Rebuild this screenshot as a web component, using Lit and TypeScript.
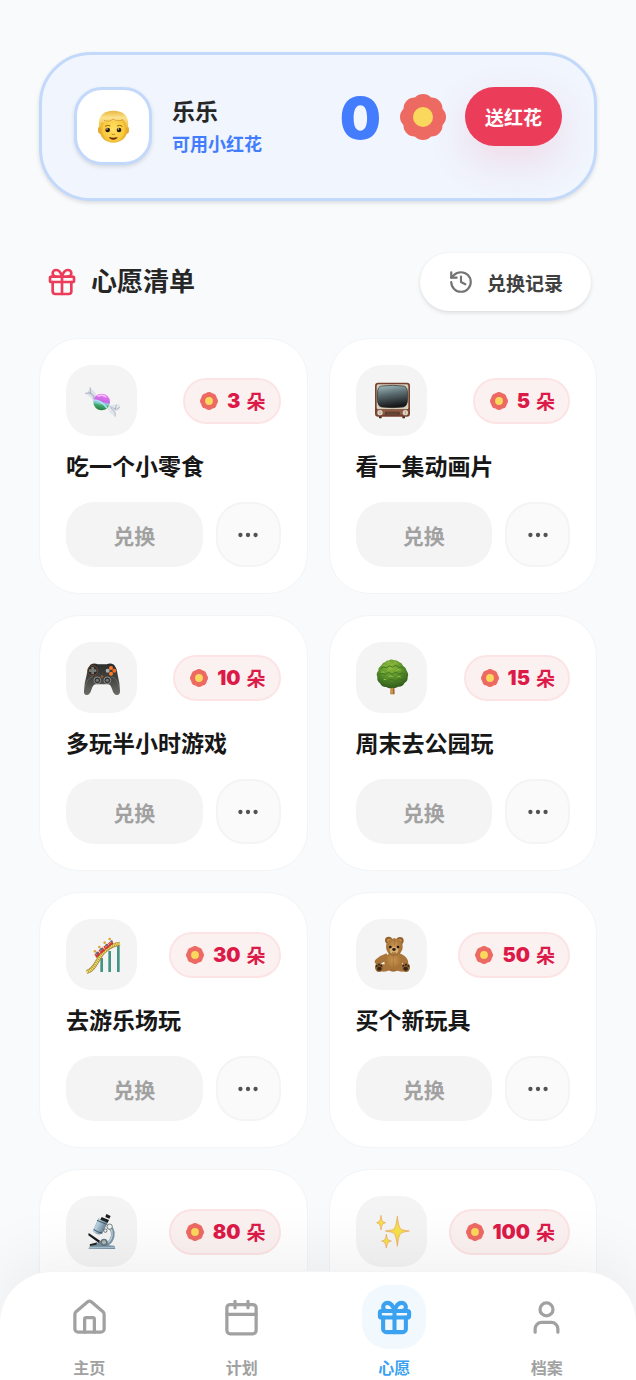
import { LitElement, css, html, svg } from "lit";
import { customElement, property } from "lit/decorators.js";
import { classMap } from "lit/directives/class-map.js";

type Wish = { title: string; cost: number; icon: string };
type Tab = { label: string; icon: string };

const wishes: Wish[] = [
  { title: "吃一个小零食", cost: 3, icon: "candy" },
  { title: "看一集动画片", cost: 5, icon: "tv" },
  { title: "多玩半小时游戏", cost: 10, icon: "gamepad" },
  { title: "周末去公园玩", cost: 15, icon: "tree" },
  { title: "去游乐场玩", cost: 30, icon: "coaster" },
  { title: "买个新玩具", cost: 50, icon: "bear" },
  { title: "去科技馆", cost: 80, icon: "microscope" },
  { title: "实现大心愿", cost: 100, icon: "sparkles" },
];

const tabs: Tab[] = [
  { label: "主页", icon: "home" },
  { label: "计划", icon: "calendar" },
  { label: "心愿", icon: "gift" },
  { label: "档案", icon: "user" },
];

// line icons, 24 x 24 grid
const lineIcons: Record<string, unknown> = {
  home: svg`<path d="M15 21v-8a1 1 0 0 0-1-1h-4a1 1 0 0 0-1 1v8" />
    <path d="M3 10a2 2 0 0 1 .709-1.528l7-5.999a2 2 0 0 1 2.582 0l7 5.999A2 2 0 0 1 21 10v9a2 2 0 0 1-2 2H5a2 2 0 0 1-2-2z" />`,
  calendar: svg`<path d="M8 2v4M16 2v4M3 10h18" />
    <rect x="3" y="4" width="18" height="18" rx="2" />`,
  gift: svg`<rect x="3" y="8" width="18" height="4" rx="1" />
    <path d="M12 8v13" />
    <path d="M19 12v7a2 2 0 0 1-2 2H7a2 2 0 0 1-2-2v-7" />
    <path d="M7.5 8a2.5 2.5 0 0 1 0-5A4.8 8 0 0 1 12 8a4.8 8 0 0 1 4.5-5 2.5 2.5 0 0 1 0 5" />`,
  user: svg`<path d="M19 21v-2a4 4 0 0 0-4-4H9a4 4 0 0 0-4 4v2" />
    <circle cx="12" cy="7" r="4" />`,
  history: svg`<path d="M3 12a9 9 0 1 0 9-9 9.75 9.75 0 0 0-6.74 2.74L3 8" />
    <path d="M3 3v5h5" />
    <path d="M12 7v5l4 2" />`,
  more: svg`<circle cx="12" cy="12" r="1" />
    <circle cx="19" cy="12" r="1" />
    <circle cx="5" cy="12" r="1" />`,
};

// coloured stickers, 111 x 111 grid
const stickers: Record<string, unknown> = {
  boy: svg`<defs>
      <radialGradient id="skin" cx=".5" cy=".55" r=".55">
        <stop offset="0" stop-color="#ffe063" />
        <stop offset=".7" stop-color="#f9cb3d" />
        <stop offset="1" stop-color="#dd9820" />
      </radialGradient>
      <linearGradient id="hair" x2="0" y2="1">
        <stop offset="0" stop-color="#e9b53c" />
        <stop offset=".4" stop-color="#fbe28c" />
        <stop offset="1" stop-color="#efbd42" />
      </linearGradient>
    </defs>
    <ellipse cx="15" cy="66" rx="6" ry="11" fill="#e8a92d" />
    <ellipse cx="96" cy="66" rx="6" ry="11" fill="#e8a92d" />
    <path d="M15 43C15 18 33 12 55 12s41 6 41 31v26c0 21-20 35-41 35S15 90 15 69z" fill="url(#skin)" />
    <path d="M12 58C8 22 27 8 55 8s49 14 44 50l-5 2c0-14-5-21-11-26-12 7-26 6-34 1-6 6-21 7-29 9-3 4-2 10-3 16z" fill="url(#hair)" />
    <path d="M27 37c12 5 22 1 27-4 8 6 20 7 30 2" fill="none" stroke="#c98c22" stroke-width="2" />
    <path d="M30 55q9-6 16-1M66 54q8-5 16 1" fill="none" stroke="#9a651a" stroke-width="3" />
    <circle cx="38" cy="66" r="7" fill="#2b160c" />
    <circle cx="72" cy="66" r="7" fill="#2b160c" />
    <circle cx="36" cy="63" r="2" fill="#fff" />
    <circle cx="70" cy="63" r="2" fill="#fff" />
    <path d="M50 78q5 4 10 0" fill="none" stroke="#c47c1d" stroke-width="3" />
    <path d="M42 87q13 4 26 0-3 8-13 8t-13-8z" fill="#6a2410" />`,
  candy: svg`<defs>
      <linearGradient id="ball" x1=".6" x2=".4" y2="1">
        <stop offset="0" stop-color="#ee7cf4" />
        <stop offset=".45" stop-color="#c668e3" />
        <stop offset=".58" stop-color="#8bd3d5" />
        <stop offset=".7" stop-color="#43ad70" />
        <stop offset="1" stop-color="#28753d" />
      </linearGradient>
    </defs>
    <path d="M21 16l17 18 2 13-10 5-24-18 10-5z" fill="#dce1ea" />
    <path d="M21 16l2 17-17 1M16 29l16 14-2 9M23 33l14 14" fill="none" stroke="#9ba2b4" stroke-width="2" />
    <path d="M80 70l29-4 2 17-12 4-2 17-17-11-6-15z" fill="#e2e5ec" />
    <path d="M80 74l20 8 11-7M84 78l12 14 1 12M100 68l-4 16" fill="none" stroke="#9aa6b0" stroke-width="2" />
    <circle cx="56" cy="60" r="25" fill="url(#ball)" />
    <path d="M32 54q22 0 40 24" fill="none" stroke="#a8e4f3" stroke-width="5" />
    <path d="M44 43q14-8 26 3" fill="none" stroke="#fac4ff" stroke-width="4" />`,
  tv: svg`<defs>
      <linearGradient id="screen" x2=".2" y2="1">
        <stop offset="0" stop-color="#a6c0c4" />
        <stop offset=".45" stop-color="#5c6d71" />
        <stop offset="1" stop-color="#17191b" />
      </linearGradient>
    </defs>
    <path d="M18 102h8v7h-8zM88 102h8v7h-8z" fill="#47271c" />
    <rect x="6" y="2" width="105" height="102" rx="9" fill="#75422f" />
    <rect x="11" y="7" width="95" height="75" rx="5" fill="#d8cebb" />
    <path d="M26 12q33-4 65 0 10 1 12 14 2 16 0 34-2 13-12 15-33 4-65 0-10-2-12-15-2-18 0-34 2-13 12-14z" fill="url(#screen)" stroke="#252525" stroke-width="2" />
    <path d="M11 83h95v15H11z" fill="#8d5a43" />
    <rect x="36" y="89" width="44" height="11" rx="3" fill="#56372b" />
    <path d="M40 93h36M40 97h36" stroke="#9b755f" stroke-width="1" />
    <circle cx="21" cy="92" r="8" fill="#ded4c5" />
    <circle cx="97" cy="92" r="8" fill="#ded4c5" />
    <path d="M21 87v10M97 87v10" stroke="#9d907d" stroke-width="2" />`,
  gamepad: svg`<defs>
      <linearGradient id="shell" x2="0" y2="1">
        <stop offset="0" stop-color="#292b2a" />
        <stop offset=".5" stop-color="#454643" />
        <stop offset="1" stop-color="#6b6c66" />
      </linearGradient>
    </defs>
    <path d="M22 17q12-7 22-1h27q10-6 22 1 8 8 11 30 7 27 7 49 0 12-9 12-10 0-15-18-4-14-12-14H39q-9 0-13 14-5 18-15 18-9 0-8-12 1-25 8-49 3-22 11-30z" fill="url(#shell)" />
    <path d="M7 83q6-28 22-29M107 83q-6-28-22-29" fill="none" stroke="#77776f" stroke-width="2" />
    <circle cx="29" cy="35" r="15" fill="#292a29" stroke="#955331" stroke-width="2" />
    <path d="M25 24h8v7h7v8h-7v7h-8v-7h-7v-8h7z" fill="#777975" />
    <circle cx="84" cy="27" r="6" fill="#ff7b28" />
    <circle cx="94" cy="35" r="6" fill="#f46a21" />
    <circle cx="84" cy="44" r="6" fill="#ff7b28" />
    <circle cx="74" cy="35" r="6" fill="#b1aeaa" />
    <circle cx="57" cy="53" r="4" fill="#a65325" />
    <circle cx="43" cy="64" r="10" fill="#2b2d2c" stroke="#8f928e" stroke-width="3" />
    <circle cx="73" cy="64" r="10" fill="#2b2d2c" stroke="#8f928e" stroke-width="3" />
    <circle cx="43" cy="64" r="5" fill="#767977" />
    <circle cx="73" cy="64" r="5" fill="#767977" />`,
  tree: svg`<defs>
      <radialGradient id="crown" cx=".45" cy=".25" r=".75">
        <stop offset="0" stop-color="#8fbd3d" />
        <stop offset=".5" stop-color="#5c922c" />
        <stop offset="1" stop-color="#2f5c1a" />
      </radialGradient>
    </defs>
    <path d="M53 78h11l1 28H52z" fill="#a16a2c" />
    <path d="M57 84v22" stroke="#e0a753" stroke-width="4" />
    <path d="M46 5q8-7 18-1 9-1 14 5 9 2 12 11 10 6 11 15 7 10 3 19 1 12-9 17-6 13-20 12-8 6-17 3-9 4-18-2-14 1-19-11-10-7-8-19-5-11 3-19 0-10 9-16 4-9 12-10 4-5 9-4z" fill="url(#crown)" />
    <g fill="none" stroke="#3f7620" stroke-width="3">
      <path d="M24 28q8-9 17-1 7-11 17-2 10-10 19 0 10-5 16 4" />
      <path d="M17 48q10-10 20-1 9-12 20 0 10-12 21-1 9-8 18 0" />
      <path d="M22 68q10-12 21-1 12-12 23 0 12-11 25-4" />
    </g>
    <g fill="none" stroke="#97c246" stroke-width="3">
      <path d="M40 12q7-6 11 0M62 12q7-4 11 2M29 20q5-4 9 1M46 31q7-5 11 0M70 34q8-5 13 1M24 40q7-4 10 1M47 53q7-5 12 0M73 54q6-4 10 0M32 62q5-3 8 1" />
    </g>`,
  coaster: svg`<g stroke="#449486" stroke-width="8">
      <path d="M56 66v42M80 45v63M106 28v80" />
    </g>
    <path d="M11 108C39 101 42 64 66 44 80 32 92 25 111 23" fill="none" stroke="#a58b38" stroke-width="12" />
    <path d="M11 108C39 101 42 64 66 44 80 32 92 25 111 23" fill="none" stroke="#f0dc6b" stroke-width="8" stroke-dasharray="4 2" />
    <path d="M34 56l11-10 8 9-12 11zM47 43l11-9 9 9-13 11zM61 32l12-9 8 9-13 9zM75 22l13-9 3 11-11 7z" fill="#c93d30" />
    <path d="M37 58l7-6M51 46l7-6M66 34l7-5M79 23l7-5" stroke="#f49379" stroke-width="3" />
    <g fill="#dba83a">
      <circle cx="36" cy="46" r="4" /><circle cx="49" cy="33" r="4" />
      <circle cx="65" cy="20" r="4" /><circle cx="80" cy="9" r="4" />
    </g>
    <path d="M39 50l5 4M52 38l5 4M68 25l5 4M83 14l4 4" stroke="#4d71a4" stroke-width="5" />`,
  bear: svg`<defs>
      <radialGradient id="fur" cx=".5" cy=".4" r=".65">
        <stop offset="0" stop-color="#c99550" />
        <stop offset="1" stop-color="#98642b" />
      </radialGradient>
    </defs>
    <circle cx="47" cy="13" r="11" fill="#94602b" /><circle cx="81" cy="14" r="11" fill="#94602b" />
    <circle cx="48" cy="14" r="6" fill="#c49559" /><circle cx="80" cy="15" r="6" fill="#c49559" />
    <path d="M41 52Q22 58 9 70q-8 8 0 14 9 4 19-4l18-9z" fill="#a97439" />
    <path d="M79 52q19 6 25 20 5 11-4 14-8 2-14-7L74 69z" fill="#a97439" />
    <ellipse cx="61" cy="78" rx="27" ry="29" fill="url(#fur)" />
    <path d="M61 56v48" stroke="#a36f33" stroke-width="2" />
    <ellipse cx="64" cy="33" rx="25" ry="26" fill="url(#fur)" />
    <path d="M64 8v20" stroke="#a36f33" stroke-width="2" />
    <ellipse cx="63" cy="43" rx="13" ry="11" fill="#d8af71" />
    <ellipse cx="52" cy="33" rx="4" ry="4" fill="#20150f" /><ellipse cx="75" cy="33" rx="4" ry="4" fill="#20150f" />
    <path d="M57 38q6-4 12 0-1 7-6 7t-6-7z" fill="#2b1911" />
    <path d="M57 50q6 4 12 0" fill="none" stroke="#674018" stroke-width="2" />
    <ellipse cx="32" cy="96" rx="22" ry="11" fill="#a97439" /><ellipse cx="87" cy="96" rx="22" ry="11" fill="#a97439" />
    <ellipse cx="18" cy="94" rx="12" ry="14" fill="#94662f" /><ellipse cx="99" cy="94" rx="12" ry="14" fill="#94662f" />
    <ellipse cx="19" cy="98" rx="7" ry="6" fill="#33241b" /><ellipse cx="98" cy="98" rx="7" ry="6" fill="#33241b" />
    <g fill="#33241b">
      <circle cx="11" cy="90" r="3" /><circle cx="18" cy="86" r="3" /><circle cx="25" cy="89" r="3" />
      <circle cx="91" cy="89" r="3" /><circle cx="99" cy="86" r="3" /><circle cx="106" cy="90" r="3" />
    </g>`,
  microscope: svg`<defs>
      <linearGradient id="tube" x2="1" y2=".5">
        <stop offset="0" stop-color="#617c92" />
        <stop offset=".4" stop-color="#b9d2e0" />
        <stop offset="1" stop-color="#536e80" />
      </linearGradient>
    </defs>
    <path d="M72 40q20 3 17 29-3 18-19 26" fill="none" stroke="#7893a3" stroke-width="11" />
    <path d="M75 42q15 5 12 27-3 16-17 23" fill="none" stroke="#bed0d8" stroke-width="4" />
    <path d="M16 107l5-9q19-3 35-16 19 1 21 15l17 1 3 10z" fill="#758fa2" />
    <path d="M18 103h76" stroke="#b4cad6" stroke-width="3" />
    <path d="M17 60l34 23-3 7-32-23z" fill="#17191a" />
    <path d="M20 94l23-6-3 7-19 4z" fill="#222627" />
    <circle cx="63" cy="88" r="11" fill="#637986" /><circle cx="63" cy="88" r="6" fill="#b6b5af" />
    <path d="M46 15l29 12-18 35q-15 7-28-7z" fill="url(#tube)" />
    <path d="M42 22l29 12M32 49q12 10 26 11" fill="none" stroke="#41596a" stroke-width="3" />
    <path d="M56 12l22 9-4 8-22-9zM70 3l13 6-4 8-12-5z" fill="#1e2020" />
    <circle cx="80" cy="41" r="8" fill="#eef1f1" stroke="#444a4c" stroke-width="2" />
    <circle cx="67" cy="53" r="5" fill="#f2f4f3" stroke="#383e40" stroke-width="2" />`,
  sparkles: svg`<defs>
      <radialGradient id="spark">
        <stop offset="0" stop-color="#f6e34c" />
        <stop offset=".5" stop-color="#f5d84c" />
        <stop offset="1" stop-color="#e8a257" />
      </radialGradient>
    </defs>
    <g fill="url(#spark)" stroke="#edac5b" stroke-width="2">
      <path d="M73 9q4 37 12 40 5 3 24 5-19 3-24 6-8 4-12 40-4-36-12-40-5-3-24-6 19-2 24-5 8-3 12-40z" />
      <path d="M24 7q2 16 5 18 2 2 9 4-7 2-9 5-3 3-5 17-2-14-5-17-2-3-8-5 6-2 8-4 3-2 5-18z" />
      <path d="M40 63q2 15 5 17 2 2 10 4-8 2-10 5-3 3-5 16-2-13-5-16-2-3-9-5 7-2 9-4 3-2 5-17z" />
    </g>`,
};

const flower = (size: number) => html`<svg
  class="flower"
  width=${size}
  height=${size}
  viewBox="0 0 46 46"
  aria-hidden="true"
>
  <g fill="#ed6a63">
    ${[0, 45, 90, 135, 180, 225, 270, 315].map(
      (angle) =>
        svg`<circle cx="23" cy="11" r="11" transform="rotate(${angle} 23 23)" />`
    )}
  </g>
  <circle cx="23" cy="23" r="10" fill="#fad85d" />
</svg>`;

const lineIcon = (name: string, size: number, weight = 2) => html`<svg
  width=${size}
  height=${size}
  viewBox="0 0 24 24"
  fill="none"
  stroke="currentColor"
  stroke-width=${weight}
  stroke-linecap="round"
  stroke-linejoin="round"
  aria-hidden="true"
>
  ${lineIcons[name]}
</svg>`;

const sticker = (name: string) => html`<svg
  width="37"
  height="37"
  viewBox="0 0 111 111"
  overflow="visible"
  aria-hidden="true"
>
  ${stickers[name]}
</svg>`;

const base = css`
  * {
    box-sizing: border-box;
  }
  svg {
    display: block;
    flex: none;
  }
  button {
    margin: 0;
    padding: 0;
    border: none;
    font: inherit;
    cursor: pointer;
  }
`;

@customElement("wish-card")
export class WishCard extends LitElement {
  @property({ attribute: false })
  wish!: Wish;

  static styles = [
    base,
    css`
      :host {
        display: block;
      }
      .card {
        padding: 26px;
        border: 1px solid #f3f4f5;
        border-radius: 40px;
        background: #fff;
      }
      .top,
      .actions {
        display: flex;
        align-items: center;
        justify-content: space-between;
      }
      .picture {
        display: grid;
        place-items: center;
        width: 71px;
        height: 71px;
        border-radius: 26px;
        background: #f4f4f4;
      }
      .cost {
        display: flex;
        align-items: center;
        height: 46px;
        padding: 0 13px 0 15px;
        border: 2px solid #fce4e5;
        border-radius: 23px;
        background: #fcf1f1;
        color: #dc1a48;
        white-space: nowrap;
      }
      .number {
        margin: 0 6px 0 9px;
        font-size: 20px;
        font-weight: 900;
      }
      .unit {
        font-size: 19px;
        font-weight: 700;
      }
      .title {
        margin: 14px 0 18px;
        color: #171717;
        font-size: 23px;
        font-weight: 700;
        line-height: 34px;
        white-space: nowrap;
      }
      .actions {
        gap: 13px;
      }
      .redeem {
        flex: 1;
        height: 65px;
        border-radius: 28px;
        background: #f4f4f4;
        color: #a1a1a1;
        font-size: 21px;
        font-weight: 700;
      }
      .more {
        display: grid;
        place-items: center;
        width: 65px;
        height: 65px;
        border: 2px solid #f4f4f4;
        border-radius: 28px;
        background: #fafafa;
        color: #525252;
      }
    `,
  ];

  render() {
    return html`<article class="card">
      <div class="top">
        <div class="picture">${sticker(this.wish.icon)}</div>
        <div class="cost">
          ${flower(18)}
          <span class="number">${this.wish.cost}</span>
          <span class="unit">朵</span>
        </div>
      </div>
      <h3 class="title">${this.wish.title}</h3>
      <div class="actions">
        <button class="redeem" type="button" disabled>兑换</button>
        <button class="more" type="button" aria-label="更多">
          ${lineIcon("more", 26)}
        </button>
      </div>
    </article>`;
  }
}

@customElement("app-root")
export class AppRoot extends LitElement {
  @property({ type: String })
  active: string = "心愿";

  @property({ type: Number })
  balance: number = 0;

  static styles = [
    base,
    css`
      :host {
        display: flex;
        flex-direction: column;
        height: 100vh;
        overflow: hidden;
        background: #f9fafc;
        color: #262626;
        font-family: Inter, "Noto Sans CJK SC", sans-serif;
      }
      /* runs on behind the rounded top of the tab bar */
      .page {
        flex: 1;
        min-height: 0;
        margin-bottom: -52px;
        padding: 52px 39px 79px;
        overflow-y: auto;
        scrollbar-width: none;
      }
      .profile {
        display: flex;
        align-items: flex-start;
        padding: 32px 32px 33px;
        border: 3px solid #c2d9fc;
        border-radius: 52px;
        background: #f0f5fe;
        box-shadow: 0 2px 4px rgba(0, 0, 0, 0.12);
      }
      .avatar {
        display: grid;
        place-items: center;
        width: 78px;
        height: 78px;
        border: 3px solid #c2d9fc;
        border-radius: 28px;
        background: #fff;
        box-shadow: 0 2px 4px rgba(0, 0, 0, 0.12);
      }
      .who {
        flex: 1;
        margin: 8px 0 0 20px;
      }
      .name {
        margin: 0;
        font-size: 23px;
        font-weight: 700;
        line-height: 34px;
      }
      .hint {
        margin: 0;
        color: #437dfd;
        font-size: 18px;
        font-weight: 700;
        line-height: 32px;
      }
      .balance {
        display: flex;
        align-items: center;
        gap: 19px;
        height: 59px;
      }
      .count {
        padding-top: 4px;
        color: #437dfd;
        font-size: 58px;
        font-weight: 900;
        line-height: 59px;
      }
      .send {
        height: 59px;
        padding: 0 20px;
        border-radius: 30px;
        background: #eb3d5a;
        box-shadow: 0 16px 40px rgba(235, 61, 90, 0.14);
        color: #fff;
        font-size: 19px;
        font-weight: 700;
      }
      .heading {
        display: flex;
        align-items: center;
        justify-content: space-between;
        margin: 52px 0 27px;
        padding: 0 6px 0 7px;
      }
      .heading-title {
        display: flex;
        align-items: center;
        gap: 13px;
        margin: 0;
        font-size: 26px;
        font-weight: 700;
        line-height: 40px;
      }
      .heading-title svg {
        color: #eb3d5a;
      }
      .records {
        display: flex;
        align-items: center;
        gap: 13px;
        height: 58px;
        padding: 0 28px;
        border-radius: 29px;
        background: #fff;
        box-shadow: 0 2px 4px rgba(0, 0, 0, 0.11), 0 0 2px rgba(0, 0, 0, 0.04);
        color: #404040;
        font-size: 19px;
        font-weight: 700;
      }
      .records svg {
        color: #737373;
      }
      .grid {
        display: grid;
        grid-template-columns: 1fr 1fr;
        gap: 21px;
      }
      .tabs {
        z-index: 1;
        display: grid;
        grid-template-columns: repeat(4, 1fr);
        padding: 13px 13px 0;
        border-top: 1px solid #f4f4f4;
        border-radius: 52px 52px 0 0;
        background: #fff;
        box-shadow: 0 -16px 64px rgba(0, 0, 0, 0.06);
      }
      .tab {
        display: flex;
        flex-direction: column;
        align-items: center;
        gap: 7px;
        color: #a1a1a1;
        font-size: 16px;
        font-weight: 700;
        line-height: 24px;
        text-decoration: none;
      }
      .tab-icon {
        display: grid;
        place-items: center;
        width: 64px;
        height: 64px;
        border-radius: 26px;
      }
      .active {
        color: #3aa2f0;
      }
      .active .tab-icon {
        background: #f1f8fe;
      }
    `,
  ];

  renderTab(tab: Tab) {
    const active = tab.label === this.active;
    return html`<a
      class=${classMap({ tab: true, active })}
      href="#${tab.icon}"
      aria-current=${active ? "page" : "false"}
    >
      <span class="tab-icon">${lineIcon(tab.icon, 39, active ? 2.5 : 2)}</span>
      <span>${tab.label}</span>
    </a>`;
  }

  render() {
    return html`
      <main class="page">
        <section class="profile">
          <div class="avatar">${sticker("boy")}</div>
          <div class="who">
            <h1 class="name">乐乐</h1>
            <p class="hint">可用小红花</p>
          </div>
          <div class="balance">
            <span class="count">${this.balance}</span>
            ${flower(46)}
            <button class="send" type="button">送红花</button>
          </div>
        </section>
        <div class="heading">
          <h2 class="heading-title">${lineIcon("gift", 32)}心愿清单</h2>
          <button class="records" type="button">
            ${lineIcon("history", 26)}兑换记录
          </button>
        </div>
        <section class="grid">
          ${wishes.map((wish) => html`<wish-card .wish=${wish}></wish-card>`)}
        </section>
      </main>
      <nav class="tabs">${tabs.map((tab) => this.renderTab(tab))}</nav>
    `;
  }
}
